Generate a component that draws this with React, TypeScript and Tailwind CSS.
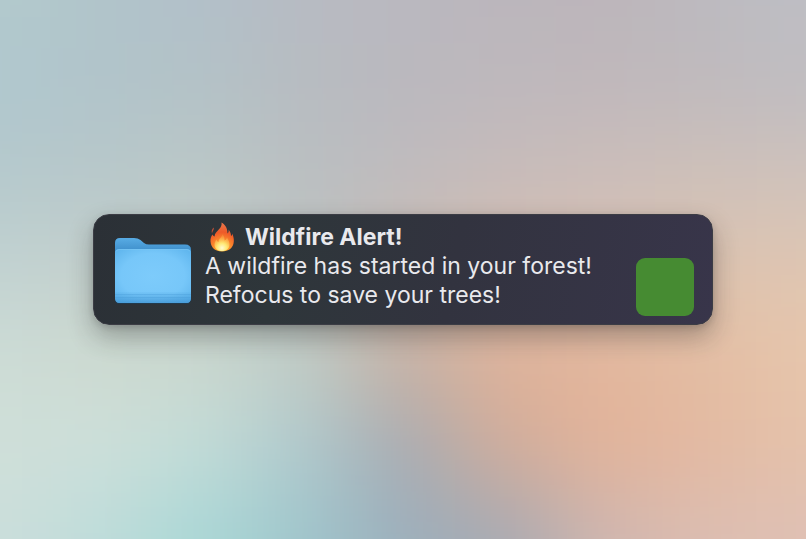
const wallpaper: string[][] = [
  ["#b2cacd", "#b1c4ca", "#b2c0c9", "#b7bbc2", "#bab8bf", "#bbb6bc", "#bcb5ba", "#bcbabf", "#bebec4"],
  ["#b0c7ce", "#b1c4ca", "#b3c2c7", "#b7bcc1", "#bab8be", "#beb8bc", "#c0b8bb", "#c0babd", "#c0bdc1"],
  ["#b6c9cc", "#b8c8ca", "#bcc8c7", "#babfc1", "#c0bcbe", "#c8bcba", "#ccbeba", "#cfc1b9", "#d0c2bb"],
  ["#c2d2d2", "#c5d1cd", "#c2ccc8", "#bcc4c3", "#cbbbb2", "#d6bcae", "#dac0b0", "#dcc3b0", "#e0c6b1"],
  ["#cddcd6", "#cddad0", "#cbd8cf", "#c0ccc6", "#c7b1a4", "#dfb299", "#e3b69c", "#e4bda2", "#e7c6ac"],
  ["#cfdfd9", "#cddfda", "#c2dcd8", "#afc9cd", "#a6abb3", "#d0ac9b", "#e2b39a", "#e3b9a2", "#e4c2ab"],
  ["#cbdedb", "#bddcda", "#a8d7d6", "#9fc6cc", "#9bafbd", "#a6aab4", "#cfb6b0", "#dcbeb2", "#dfc0b5"],
];

function Wallpaper() {
  const edge = 150;
  return (
    <svg
      className="absolute inset-0 h-full w-full"
      viewBox="0 0 800 540"
      preserveAspectRatio="none"
      aria-hidden="true"
    >
      <defs>
        <filter
          id="soften"
          filterUnits="userSpaceOnUse"
          colorInterpolationFilters="sRGB"
          x="-200"
          y="-200"
          width="1200"
          height="940"
        >
          <feGaussianBlur stdDeviation="42" />
        </filter>
      </defs>
      <g filter="url(#soften)" shapeRendering="crispEdges">
        {wallpaper.map((row, r) =>
          row.map((color, c) => {
            const x0 = c === 0 ? -edge : c * 100 - 50;
            const x1 = c === row.length - 1 ? 800 + edge : c * 100 + 50;
            const y0 = r === 0 ? -edge : r * 90 - 45;
            const y1 = r === wallpaper.length - 1 ? 540 + edge : r * 90 + 45;
            return <rect key={`${r}-${c}`} x={x0} y={y0} width={x1 - x0} height={y1 - y0} fill={color} />;
          }),
        )}
      </g>
    </svg>
  );
}

function FolderIcon() {
  return (
    <svg className="h-[68px] w-[78px] shrink-0" viewBox="0 0 78 68" role="img" aria-label="Folder">
      <defs>
        <linearGradient id="folderBack" x1="0" y1="0" x2="0" y2="14" gradientUnits="userSpaceOnUse">
          <stop offset="0" stopColor="#5aaee6" />
          <stop offset="1" stopColor="#3f8fcb" />
        </linearGradient>
        <radialGradient id="folderFront" cx="0.5" cy="0.5" r="0.7">
          <stop offset="0" stopColor="#7dcbfb" />
          <stop offset="0.6" stopColor="#77c7f9" />
          <stop offset="1" stopColor="#5cb3ec" />
        </radialGradient>
        <linearGradient id="folderBase" x1="0" y1="0" x2="0" y2="1">
          <stop offset="0" stopColor="#4ba2de" stopOpacity="0.1" />
          <stop offset="1" stopColor="#3f93d2" stopOpacity="0.75" />
        </linearGradient>
      </defs>
      <path d="M1 62V6Q1 1 6 1H18Q21 1 23 2.500L30 6.500Q32 7.500 35 7.500H72Q77 7.500 77 12.500V63Q77 67 73 67H5Q1 67 1 63Z" fill="#1e3d56" opacity="0.7" />
      <path d="M1 60V6Q1 1 6 1H20Q24 1 26.500 3L30 6Q32 7.500 35 7.500H71Q77 7.500 77 13V60Z" fill="url(#folderBack)" />
      <path d="M1 16Q1 12 5 12H73Q77 12 77 16V61Q77 66 72 66H6Q1 66 1 61Z" fill="url(#folderFront)" />
      <path d="M2 14.500Q3 12.500 5 12.500H73Q75 12.500 76 14.500" fill="none" stroke="#7cc6f4" strokeOpacity="0.6" />
      <path d="M1 55H77V61Q77 66 72 66H6Q1 66 1 61Z" fill="url(#folderBase)" />
      <path d="M1 57.500H77M1 60.500H77" stroke="#479cd8" strokeOpacity="0.35" />
    </svg>
  );
}

function FlameIcon() {
  return (
    <svg className="h-[30px] w-[26px] shrink-0" viewBox="0 0 26 30" role="img" aria-label="Fire">
      <defs>
        <radialGradient id="flameOuter" cx="13" cy="27" r="26" gradientUnits="userSpaceOnUse">
          <stop offset="0" stopColor="#ffc83a" />
          <stop offset="0.35" stopColor="#fb8a2c" />
          <stop offset="0.65" stopColor="#ee5a29" />
          <stop offset="1" stopColor="#e8764a" />
        </radialGradient>
        <radialGradient id="flameInner" cx="13" cy="26" r="14" gradientUnits="userSpaceOnUse">
          <stop offset="0" stopColor="#fffbd2" />
          <stop offset="0.35" stopColor="#ffe873" />
          <stop offset="1" stopColor="#fd9438" stopOpacity="0.3" />
        </radialGradient>
      </defs>
      <path
        d="M12.500 0.500C17 3 18.500 7 18.500 11.500C19.500 10.500 20 9 19.500 7.500C21.500 10 22 12 22 14C23 13.500 23.300 12.500 23.300 11.500C24.500 14.500 25 17 24.800 19.500C24.500 26 19.500 29.500 13 29.500C6.500 29.500 2 26 1.500 19.500C1.300 16.500 2 14.500 3.500 12.500C4 13.500 4.700 14.300 5.500 14.500C5.700 11.500 8 9.500 10 7.300C12 5.200 13 3 12.500 0.500Z"
        fill="url(#flameOuter)"
      />
      <path d="M5 5.500C3 6.700 2.200 9 3 11.500C3.200 9.500 5 8.400 5 5.500Z" fill="#d9583a" opacity="0.8" />
      <path
        d="M13.500 12C15.500 15 15.500 16.500 15.500 18.500C16.700 18 17.500 17 18 15.500C19.500 18 20.500 20 20.500 22.500C20.500 26.500 17.500 29 13 29C8.500 29 5.500 26.500 5.500 22.500C5.500 20.500 6.500 18.500 7.500 17.500C8 19 8.700 19.700 9.500 20C9.500 16.500 13 15.500 13.500 12Z"
        fill="url(#flameInner)"
      />
    </svg>
  );
}

export default function App() {
  return (
    <main className="relative flex min-h-screen items-center justify-center overflow-hidden bg-[#c0c2c2] px-[93px] font-['Inter','Liberation_Sans',sans-serif]">
      <Wallpaper />
      <section
        role="alert"
        className="relative flex w-full max-w-[620px] rounded-[16px] border border-[#3c3d45] bg-[linear-gradient(100deg,#2b3036_0%,#2e363a_30%,#32333f_58%,#38354a_100%)] pt-[7px] pr-[18px] pb-2 pl-5 shadow-[0_12px_26px_rgba(30,30,30,0.32),0_2px_6px_rgba(30,30,30,0.16)]"
      >
        <div className="flex items-center pt-1">
          <FolderIcon />
        </div>
        <div className="ml-[13px] min-w-0 flex-1 pb-[6px] text-[23px] leading-[29px] text-[#e9e9ed]">
          <h1 className="flex items-center gap-[10px] pl-1 font-bold">
            <FlameIcon />
            Wildfire Alert!
          </h1>
          <p>A wildfire has started in your forest!</p>
          <p>Refocus to save your trees!</p>
        </div>
        <div className="size-[58px] shrink-0 self-end rounded-[9px] bg-[#468b32]" />
      </section>
    </main>
  );
}
